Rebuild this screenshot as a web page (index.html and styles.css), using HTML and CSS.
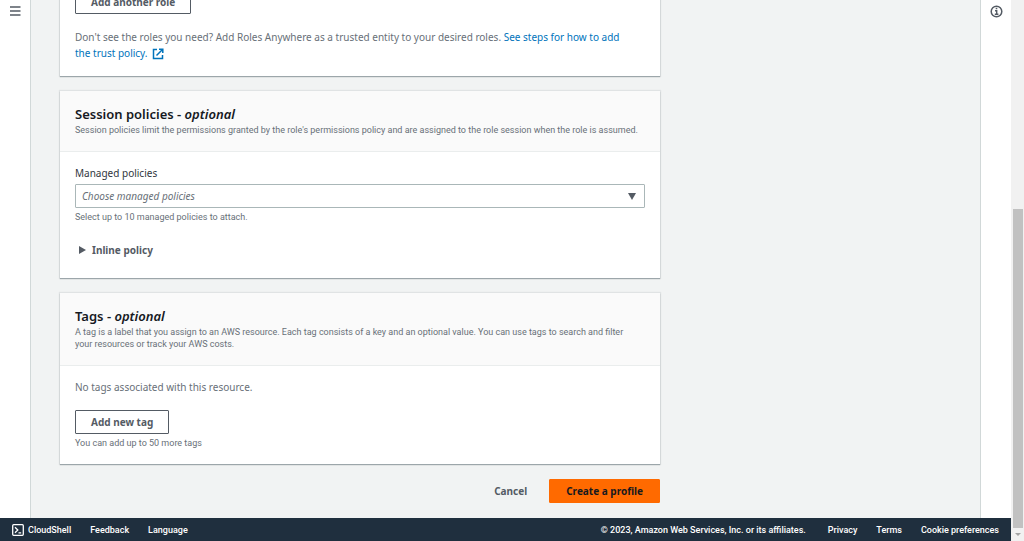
FILE: index.html
```html
<!DOCTYPE html>
<html lang="en">
<head>
    <meta charset="UTF-8">
    <meta name="viewport" content="width=device-width, initial-scale=1.0">
    <title>Create a profile</title>
    <link rel="stylesheet" href="styles.css">
</head>
<body>
    <div class="app">
        <div class="layout">
            <nav class="side-panel side-panel-left">
                <button type="button" class="icon-button" aria-label="Open navigation">
                    <svg width="12" height="12" viewBox="0 0 12 12"><path d="M1 2h10.500M1 6h10.500M1 10h10.500" stroke="#545b64" stroke-width="1.6"/></svg>
                </button>
            </nav>
            <main class="content">
                <form class="profile-form">
                    <section class="card">
                        <div class="card-body roles-body">
                            <button type="button" class="button">Add another role</button>
                            <p class="text">Don't see the roles you need? Add Roles Anywhere as a trusted entity to your desired roles. <a href="#" class="link">See steps for how to add the trust policy.
                                <svg class="external-icon" width="12" height="12" viewBox="0 0 12 12" fill="none" stroke="#0073bb" stroke-width="1.5"><path d="M5 1.5H1.500V10.500H10.500V7M7 1.200H10.800V5M10.500 1.500L4.500 7.500"/></svg></a>
                            </p>
                        </div>
                    </section>

                    <section class="card">
                        <header class="card-header">
                            <h2>Session policies - <i>optional</i></h2>
                            <p class="hint">Session policies limit the permissions granted by the role's permissions policy and are assigned to the role session when the role is assumed.</p>
                        </header>
                        <div class="card-body">
                            <label for="managed-policies" class="field-label">Managed policies</label>
                            <select id="managed-policies" class="select">
                                <option>Choose managed policies</option>
                            </select>
                            <p class="hint field-hint">Select up to 10 managed policies to attach.</p>
                            <button type="button" class="expander" aria-expanded="false">
                                <svg width="7" height="8" viewBox="0 0 7 8"><path d="M0 0L7 4L0 8Z" fill="#545b64"/></svg>
                                Inline policy
                            </button>
                        </div>
                    </section>

                    <section class="card">
                        <header class="card-header">
                            <h2>Tags - <i>optional</i></h2>
                            <p class="hint">A tag is a label that you assign to an AWS resource. Each tag consists of a key and an optional value. You can use tags to search and filter your resources or track your AWS costs.</p>
                        </header>
                        <div class="card-body">
                            <p class="text">No tags associated with this resource.</p>
                            <button type="button" class="button tag-button">Add new tag</button>
                            <p class="hint field-hint">You can add up to 50 more tags</p>
                        </div>
                    </section>

                    <div class="actions">
                        <button type="button" class="button button-link">Cancel</button>
                        <button type="submit" class="button button-primary">Create a profile</button>
                    </div>
                </form>
            </main>
            <aside class="side-panel side-panel-right">
                <button type="button" class="icon-button" aria-label="Info">
                    <svg width="13" height="13" viewBox="0 0 13 13" fill="none" stroke="#545b64"><circle cx="6.500" cy="6.500" r="5.300" stroke-width="1.500"/><path d="M5 5.700H6.700V9.200M4.800 9.200H8.400M5.700 3.500H7.300" stroke-width="1.400"/></svg>
                </button>
            </aside>
        </div>
        <footer class="footer">
            <a href="#" class="cloudshell">
                <svg width="12" height="12" viewBox="0 0 12 12" fill="none" stroke="#fff" stroke-width="1.300"><rect x="0.700" y="0.700" width="10.600" height="10.600" rx="1"/><path d="M3 3.200L5.800 6L3 8.800M6.500 8.800H9.200"/></svg>
                CloudShell
            </a>
            <a href="#">Feedback</a>
            <a href="#">Language</a>
            <span class="copyright">© 2023, Amazon Web Services, Inc. or its affiliates.</span>
            <a href="#">Privacy</a>
            <a href="#">Terms</a>
            <a href="#">Cookie preferences</a>
        </footer>
    </div>
    <div class="scrollbar">
        <div class="scrollbar-thumb"></div>
        <svg class="scrollbar-arrow" width="6" height="3" viewBox="0 0 6 3"><path d="M0 0H6L3 3Z" fill="#a3a3a3"/></svg>
    </div>
</body>
</html>
```
FILE: styles.css
```css
:root {
    --text-color: #545b64;
    --hint-color: #687078;
    --heading-color: #16191f;
    --link-color: #0073bb;
    --primary-color: #ff6a00;
    --footer-color: #1f2f3e;
    --background-color: #f1f3f3;
    --border-color: #d1d8d8;
}
* {
    box-sizing: border-box;
}
body {
    display: flex;
    height: 100vh;
    margin: 0;
    overflow: hidden;
    font-family: "Noto Sans", "Open Sans", sans-serif;
    font-size: 10px;
    line-height: 16px;
    color: var(--text-color);
    background-color: var(--background-color);
}
h2, p {
    margin: 0;
}
button, select {
    font: inherit;
    color: inherit;
}
a {
    color: inherit;
    text-decoration: none;
}
svg {
    flex: none;
}
.app {
    display: flex;
    flex: 1;
    flex-direction: column;
    min-width: 0;
}
.layout {
    display: flex;
    flex: 1;
    min-height: 0;
}
.side-panel {
    flex: none;
    width: 31px;
    background-color: #fff;
}
.side-panel-left {
    border-right: 1px solid var(--border-color);
}
.side-panel-right {
    border-left: 1px solid var(--border-color);
}
.icon-button {
    display: flex;
    justify-content: center;
    width: 100%;
    padding: 5px 0;
    border: none;
    background: none;
    cursor: pointer;
}
/* the form is scrolled to its end */
.content {
    display: flex;
    flex: 1;
    flex-direction: column;
    justify-content: flex-end;
    min-width: 0;
    padding: 0 29px 15px;
    overflow: hidden;
}
.profile-form {
    display: flex;
    flex-direction: column;
    gap: 15px;
    max-width: 600px;
}
.card {
    background-color: #fff;
    box-shadow: 0 1px 1px rgba(0, 28, 36, 0.3), 0 0 1px 1px rgba(0, 28, 36, 0.07);
}
.card-header {
    padding: 13px 20px 15px 15px;
    border-bottom: 1px solid #eaeded;
    background-color: #fafafa;
}
.card-header h2 {
    font-size: 13px;
    font-weight: 600;
    line-height: 20px;
    color: var(--heading-color);
}
.card-body {
    display: flex;
    flex-direction: column;
    align-items: flex-start;
    padding: 13px 15px 15px;
}
.text {
    color: var(--hint-color);
}
.roles-body {
    gap: 15px;
}
.roles-body .text {
    padding-right: 15px;
}
.link {
    color: var(--link-color);
}
.external-icon {
    margin-left: 2px;
    vertical-align: middle;
}
.hint {
    font-family: Roboto, "Noto Sans", sans-serif;
    font-size: 9px;
    line-height: 12px;
    color: var(--hint-color);
}
.field-label {
    margin-bottom: 3px;
    color: #30363d;
}
.select {
    width: 100%;
    height: 24px;
    padding: 0 6px;
    border: 1px solid #aab7b8;
    border-radius: 1px;
    appearance: none;
    font-style: italic;
    color: var(--hint-color);
    background: url("data:image/svg+xml,%3Csvg xmlns='http://www.w3.org/2000/svg' width='8' height='7' viewBox='0 0 8 7'%3E%3Cpath d='M0 0H8L4 7Z' fill='%23545b64'/%3E%3C/svg%3E") no-repeat right 8px center #fff;
}
.field-hint {
    margin-top: 3px;
}
.expander {
    display: flex;
    align-items: center;
    gap: 6px;
    margin: 19px 0 5px;
    padding: 0 4px;
    border: none;
    background: none;
    font-weight: 700;
    cursor: pointer;
}
.button {
    height: 24px;
    padding: 0 15px;
    border: 1px solid var(--text-color);
    border-radius: 1px;
    background-color: #fff;
    font-weight: 700;
    line-height: 16px;
    white-space: nowrap;
    cursor: pointer;
}
.tag-button {
    margin-top: 15px;
}
.actions {
    display: flex;
    justify-content: flex-end;
    gap: 6px;
}
.button-link {
    border-color: transparent;
    background-color: transparent;
}
.button-primary {
    padding: 0 16px;
    border-color: var(--primary-color);
    background-color: var(--primary-color);
    color: var(--heading-color);
}
.footer {
    display: flex;
    flex: none;
    align-items: center;
    gap: 19px;
    height: 23px;
    padding: 0 12px;
    background-color: var(--footer-color);
    font-family: Roboto, "Noto Sans", sans-serif;
    font-size: 9px;
    font-weight: 500;
    color: #fff;
    white-space: nowrap;
}
.cloudshell {
    display: flex;
    align-items: center;
    gap: 4px;
}
.copyright {
    margin-right: 3px;
    margin-left: auto;
}
.scrollbar {
    display: flex;
    flex: none;
    flex-direction: column;
    align-items: center;
    justify-content: flex-end;
    gap: 5px;
    width: 13px;
    background-color: #f1f1f1;
}
.scrollbar-thumb {
    width: 10px;
    height: 59%;
    background-color: #c1c1c1;
}
.scrollbar-arrow {
    margin-bottom: 5px;
}
```
